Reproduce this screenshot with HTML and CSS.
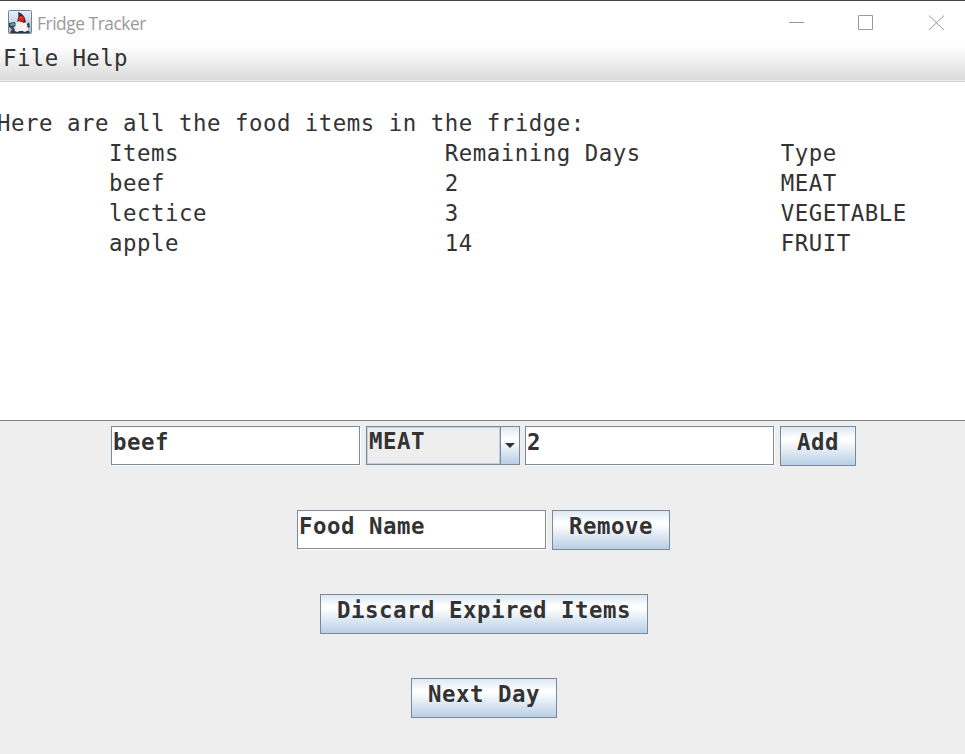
FILE: index.html
```html
<!DOCTYPE html>
<html lang="en">
<head>
<meta charset="utf-8">
<title>Fridge Tracker</title>
<link rel="stylesheet" href="styles.css">
</head>
<body>
<header class="titlebar">
  <svg class="app-icon" width="24" height="24" viewBox="0 0 24 24">
    <defs><linearGradient id="tile" x1="0" y1="0" x2="0" y2="1"><stop offset="0" stop-color="#e8f0f8"/><stop offset=".6" stop-color="#c3d3e4"/><stop offset="1" stop-color="#a3b7cc"/></linearGradient></defs>
    <rect x=".5" y=".5" width="23" height="23" rx="1" fill="url(#tile)" stroke="#70849c"/>
    <path d="M1 13L7 12L8 16L5 17L7 20L4 23H2L4 19L1 17ZM18 15L21 12L22 17L20 18Z" fill="#384350"/>
    <path d="M2 14L6 13L7 15L3 16Z" fill="#6f9fc4"/>
    <path d="M5 21H21L22 23H3Z" fill="#30343a"/>
    <path d="M7 21L7.500 15L10 10L17 11L19 15L20 20L17 22L13 20.500L9 22Z" fill="#f2f2f2"/>
    <path d="M10 2C14 3 17 6 18 12L16 13L11 11L9 12C10 8 11 6 10 2Z" fill="#30343a"/>
    <circle cx="13.3" cy="9" r="3" fill="#e61c22"/>
    <path d="M12 8Q13 7 14 7.5" fill="none" stroke="#ff6464"/>
  </svg>
  <span class="window-title">Fridge Tracker</span>
  <svg class="window-controls" width="156" height="16" viewBox="0 0 156 16" fill="none" stroke="#999">
    <path d="M0 7.5H15M69.5 .5H83.5V14.5H69.5Z"/>
    <path d="M140 .5L155 15M155 .5L140 15"/>
  </svg>
</header>
<nav class="menubar"><span>File</span> <span>Help</span></nav>
<main class="listing">
<pre>Here are all the food items in the fridge:
	Items			Remaining Days		Type
	beef			2			MEAT
	lectice			3			VEGETABLE
	apple			14			FRUIT</pre>
</main>
<section class="controls">
  <div class="row">
    <div class="field">beef</div>
    <div class="combo"><span class="combo-value">MEAT</span><span class="combo-arrow"><svg width="10" height="5" viewBox="0 0 10 5"><path d="M0 0H10L5 5Z" fill="#333"/></svg></span></div>
    <div class="field">2</div>
    <div class="button">Add</div>
  </div>
  <div class="row">
    <div class="field">Food Name</div>
    <div class="button">Remove</div>
  </div>
  <div class="row narrow"><div class="button">Discard Expired Items</div></div>
  <div class="row narrow"><div class="button">Next Day</div></div>
</section>
</body>
</html>
```
FILE: styles.css
```css
* { box-sizing: border-box; }
body {
  margin: 0;
  width: 965px;
  height: 754px;
  overflow: hidden;
  display: flex;
  flex-direction: column;
  background: #eee;
  color: #333;
  font: 22.4px/30px "DejaVu Sans Mono", monospace;
  letter-spacing: 0.514px;
}
.titlebar {
  height: 46px;
  flex: none;
  display: flex;
  align-items: flex-start;
  padding: 9px 20px 0 8px;
  border-top: 1px solid #444;
  background: #fff;
}
.window-title {
  margin: 0 auto 0 5px;
  font: 17.3px/28px "Open Sans", sans-serif;
  letter-spacing: -0.42px;
  color: #999;
}
.window-controls { margin-top: 5px; }
.menubar {
  height: 36px;
  flex: none;
  padding: 0 3px;
  line-height: 24px;
  letter-spacing: 0.4px;
  background: linear-gradient(#fff, #dadada);
  border-bottom: 1px solid #ccc;
  box-shadow: inset 0 -1px #eee;
  white-space: pre;
}
.listing {
  height: 339px;
  flex: none;
  padding-top: 26px;
  overflow: hidden;
  background: #fff;
  border-bottom: 1px solid #808080;
}
.listing pre {
  margin: 0 0 0 -3px;
  font: inherit;
  tab-size: 8;
}
.controls {
  padding-top: 5px;
  display: grid;
  grid-auto-rows: 84px;
  font-weight: bold;
  line-height: 30px;
}
.row {
  display: flex;
  justify-content: center;
  align-items: flex-start;
  gap: 5px;
  padding-left: 2px;
}
.row.narrow { padding-left: 3px; }
.field {
  width: 249px;
  height: 39px;
  margin-right: 1px;
  padding-left: 1px;
  border: 1px solid #7a8a99;
  box-shadow: 1px 1px #fff;
  background: #fff;
}
.combo {
  width: 154px;
  height: 39px;
  display: flex;
  border: 1px solid #7a8a99;
}
.combo-value {
  flex: 1;
  padding-left: 1px;
  line-height: 26px;
  border: 1px solid #b8cfe5;
}
.combo-arrow {
  width: 19px;
  display: flex;
  align-items: center;
  justify-content: center;
  border-left: 1px solid #7a8a99;
  background: linear-gradient(#dde8f3, #fff 30%, #fff 35%, #b8cfe5);
}
.button {
  height: 40px;
  padding: 0 16px;
  border: 1px solid #7a8a99;
  background: linear-gradient(#dde8f3, #fff 30%, #fff 35%, #b8cfe5);
  white-space: nowrap;
}
```
